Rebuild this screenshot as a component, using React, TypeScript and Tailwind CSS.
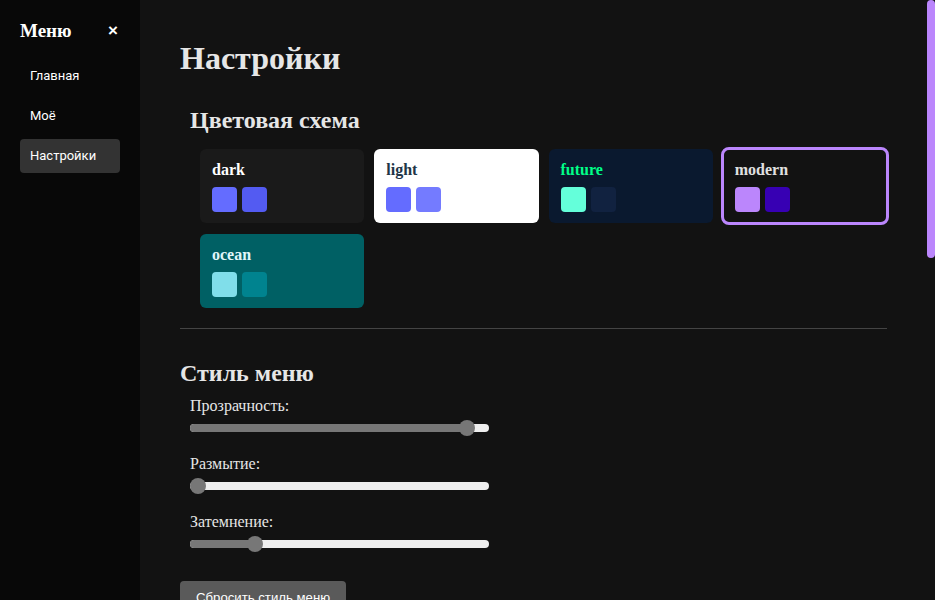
import React, { useState } from 'react';

// --- темы ---
const THEMES = [
  { id: 'dark', bg: 'bg-[#1a1a1a]', text: 'text-white', a: 'bg-[#646cff]', b: 'bg-[#535bf2]' },
  { id: 'light', bg: 'bg-white', text: 'text-[#213547]', a: 'bg-[#646cff]', b: 'bg-[#747bff]' },
  { id: 'future', bg: 'bg-[#0a192f]', text: 'text-[#00ff88]', a: 'bg-[#64ffda]', b: 'bg-[#112240]' },
  { id: 'modern', bg: 'bg-[#121212]', text: 'text-[#e0e0e0]', a: 'bg-[#bb86fc]', b: 'bg-[#3700b3]' },
  { id: 'ocean', bg: 'bg-[#006064]', text: 'text-[#e0f7fa]', a: 'bg-[#80deea]', b: 'bg-[#00838f]' },
];

const Slider = ({ label, value }: { label: string; value: number }) => (
  <div className="flex flex-col gap-[5px]">
    <span className="text-[16px] leading-[18px] text-[#e6e6e6]">{label}</span>
    <div className="relative h-4 w-[299px] flex items-center">
      <div className="h-2 w-full rounded-full bg-[#eeeeee] overflow-hidden">
        <div className="h-full bg-[#777777]" style={{ width: `${value * 100}%` }} />
      </div>
      <div
        className="absolute top-0 h-4 w-4 rounded-full bg-[#777777]"
        style={{ left: `calc(${value} * (100% - 16px))` }}
      />
    </div>
  </div>
);

export default function App() {
  const [theme, setTheme] = useState('modern');

  return (
    <div className="flex h-[600px] w-full bg-[#121212] font-['Liberation_Serif',serif] text-[#e6e6e6]">
      {/* SIDEBAR */}
      <aside className="w-[140px] shrink-0 bg-[#080808] px-5 pt-[20px]">
        <div className="flex items-center justify-between h-[22px]">
          <span className="text-[19px] font-bold text-white">Меню</span>
          <span className="mr-[2px] font-['Liberation_Sans',sans-serif] text-[17px] font-bold text-white">×</span>
        </div>
        <nav className="mt-[17px] flex flex-col gap-[6px] font-['Roboto',sans-serif] text-[13px] text-white">
          <div className="h-[34px] px-[10px] flex items-center rounded">Главная</div>
          <div className="h-[34px] px-[10px] flex items-center rounded">Моё</div>
          <div className="h-[34px] px-[10px] flex items-center rounded bg-[#333333]">Настройки</div>
        </nav>
      </aside>

      {/* MAIN */}
      <main className="relative flex-1 h-[600px] overflow-hidden pr-2">
        {/* ползунок прокрутки */}
        <div className="absolute right-0 top-0 h-[258px] w-2 rounded-full bg-[#bb86fc]" />

        <div className="px-10 pt-[40px]">
          <h1 className="text-[32px] leading-[36px] font-bold text-[#e6e6e6]">Настройки</h1>

          <section className="mt-[30px] pl-[10px]">
            <h2 className="text-[24px] leading-[28px] font-bold">Цветовая схема</h2>
            <div className="mt-[15px] ml-[10px] grid grid-cols-4 gap-x-[10px] gap-y-[11px]">
              {THEMES.map(t => (
                <button
                  key={t.id}
                  onClick={() => setTheme(t.id)}
                  className={`flex h-[74px] flex-col items-start justify-start rounded-md px-3 pt-[12px] text-left ${t.bg} ${
                    theme === t.id ? 'outline-[3px] outline-solid outline-[#bb86fc] -outline-offset-1' : ''
                  }`}
                >
                  <div className={`text-[16px] leading-[18px] font-bold ${t.text}`}>{t.id}</div>
                  <div className="mt-[8px] flex gap-[5px]">
                    <span className={`h-[25px] w-[25px] rounded ${t.a}`} />
                    <span className={`h-[25px] w-[25px] rounded ${t.b}`} />
                  </div>
                </button>
              ))}
            </div>
          </section>

          <hr className="mt-[20px] border-0 border-t border-[#444444]" />

          <section className="mt-[30px]">
            <h2 className="text-[24px] leading-[28px] font-bold">Стиль меню</h2>
            <div className="mt-[10px] pl-[10px] flex flex-col gap-[19px]">
              <Slider label="Прозрачность:" value={0.95} />
              <Slider label="Размытие:" value={0} />
              <Slider label="Затемнение:" value={0.2} />
            </div>
            <button className="mt-[29px] h-[34px] rounded px-4 bg-[#5a5a5a] font-['Liberation_Sans',sans-serif] text-[13.2px] text-white">
              Сбросить стиль меню
            </button>
          </section>
        </div>
      </main>
    </div>
  );
}
